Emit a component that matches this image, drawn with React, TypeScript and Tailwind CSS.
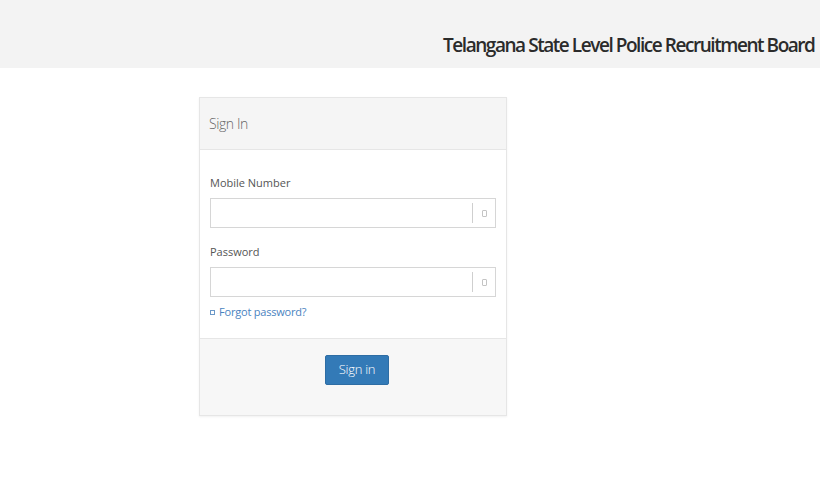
import React from "react";

function Field({ label, type }: { label: string; type: string }) {
  return (
    <div>
      <div className="text-[11px] leading-[14px] text-[#555] mb-[8px]">{label}</div>
      <div className="flex h-[30px] w-[286px] border border-[#d6d6d6] bg-white">
        <input type={type} className="flex-1 min-w-0 outline-none px-2 text-[12px] bg-transparent" />
        <div className="flex items-center">
          <div className="w-px h-[20px] bg-[#cfcfcf]" />
          <div className="w-[22px] flex items-center justify-center">
            <div className="w-[5px] h-[7px] border border-[#c4c4c4] rounded-[1px]" />
          </div>
        </div>
      </div>
    </div>
  );
}

export default function App() {
  return (
    <div className="w-[820px] h-[500px] bg-white overflow-hidden" style={{ fontFamily: '"Open Sans", "Liberation Sans", sans-serif' }}>
      <div className="h-[68px] bg-[#f3f3f3] flex items-center pl-[443px] overflow-hidden">
        <div className="whitespace-nowrap text-[19px] font-semibold text-[#2b2b2b] tracking-[-1.45px] pt-[22px]">
          Telangana State Level Police Recruitment Board
        </div>
      </div>
      <div className="ml-[199px] mt-[29px] w-[308px] border border-[#e6e6e6] shadow-[0_1px_2px_rgba(0,0,0,0.06)]">
        <div className="h-[52px] bg-[#f5f5f5] border-b border-[#e6e6e6] flex items-center px-[9px]">
          <span className="text-[14px] font-light text-[#666] tracking-[-0.4px]">Sign In</span>
        </div>
        <div className="px-[10px] pt-[26px] pb-[19px] bg-white">
          <Field label="Mobile Number" type="text" />
          <div className="h-[17px]" />
          <Field label="Password" type="password" />
          <div className="mt-[8px] text-[11px] leading-[14px] text-[#4a83bf] flex items-center gap-[4px] tracking-[-0.2px]">
            <span className="inline-block w-[5px] h-[5px] border border-[#6b98c8]" />
            <span>Forgot password?</span>
          </div>
        </div>
        <div className="h-[77px] bg-[#f7f7f7] border-t border-[#e6e6e6] flex justify-center pt-[16px] pl-[8px]">
          <button className="w-[64px] h-[30px] bg-[#337ab7] border border-[#2e6da4] rounded-[2px] text-white text-[13px] font-light tracking-[-0.3px]">
            Sign in
          </button>
        </div>
      </div>
    </div>
  );
}
